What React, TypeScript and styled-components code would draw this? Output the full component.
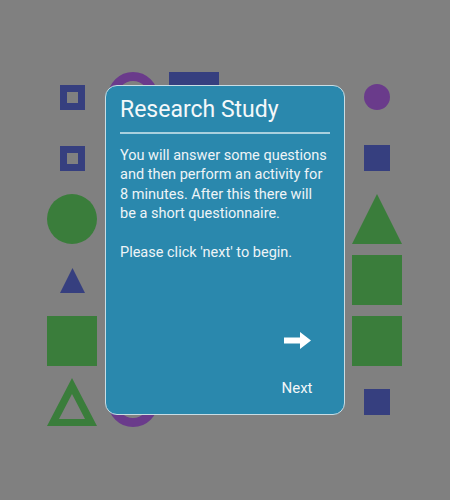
import React from "react";
import styled, { createGlobalStyle } from "styled-components";

const Global = createGlobalStyle`
  html, body { margin: 0; padding: 0; background: #808080; }
  body { font-family: Roboto, "Liberation Sans", sans-serif; }
`;

const BLUE = "#363f7f";
const GREEN = "#3a7d3b";
const PURPLE = "#6a3b8b";

const Page = styled.div`
  position: relative;
  width: 450px;
  height: 500px;
  background: #808080;
  box-sizing: border-box;
  padding: 72px 0 0 47px;
  overflow: hidden;
`;

const ShapeGrid = styled.div`
  display: grid;
  grid-template-columns: repeat(6, 50px);
  grid-template-rows: repeat(6, 50px);
  gap: 11px;
`;

const Cell = styled.div`
  display: flex;
  align-items: center;
  justify-content: center;
`;

const Square = styled.div<{ $size: number; $color: string }>`
  width: ${(p) => p.$size}px;
  height: ${(p) => p.$size}px;
  background: ${(p) => p.$color};
`;

const HollowSquare = styled.div<{ $size: number; $color: string; $border: number }>`
  box-sizing: border-box;
  width: ${(p) => p.$size}px;
  height: ${(p) => p.$size}px;
  border: ${(p) => p.$border}px solid ${(p) => p.$color};
`;

const Circle = styled.div<{ $size: number; $color: string }>`
  width: ${(p) => p.$size}px;
  height: ${(p) => p.$size}px;
  border-radius: 50%;
  background: ${(p) => p.$color};
`;

const Ring = styled.div<{ $size: number; $color: string; $border: number }>`
  box-sizing: border-box;
  width: ${(p) => p.$size}px;
  height: ${(p) => p.$size}px;
  border-radius: 50%;
  border: ${(p) => p.$border}px solid ${(p) => p.$color};
`;

const Triangle = ({ size, color, hollow }: { size: number; color: string; hollow?: boolean }) => (
  <svg width={size} height={size} viewBox="0 0 50 50">
    {hollow ? (
      <path
        fillRule="evenodd"
        fill={color}
        d="M25 1 L50 49 L0 49 Z M25 17 L12 42 L38 42 Z"
      />
    ) : (
      <path fill={color} d="M25 0 L50 50 L0 50 Z" />
    )}
  </svg>
);

const Card = styled.div`
  position: absolute;
  inset: 0;
  margin: auto;
  width: 240px;
  height: 330px;
  box-sizing: border-box;
  background: #2a88ad;
  border: 1.5px solid #c9dde4;
  border-radius: 12px;
  padding: 9px 14px 17px 14px;
  display: flex;
  flex-direction: column;
  color: #f2f6f8;
`;

const Title = styled.h1`
  margin: 0;
  font-family: Roboto, "Liberation Sans", sans-serif;
  font-weight: 400;
  font-size: 23px;
  line-height: 30px;
  color: #f4f8fa;
`;

const Divider = styled.hr`
  margin: 7px 0 0 0;
  border: none;
  height: 1.5px;
  background: #a9d0de;
`;

const Body = styled.p`
  margin: 12px 0 0 0;
  font-size: 14.5px;
  line-height: 19.5px;
  color: #eef4f7;
  white-space: pre-line;
`;

const Footer = styled.div`
  margin-top: auto;
  display: flex;
  justify-content: flex-end;
`;

const NextButton = styled.button`
  width: 66px;
  background: none;
  border: none;
  padding: 0;
  display: flex;
  flex-direction: column;
  align-items: center;
  gap: 30px;
  color: #f2f6f8;
  font-family: Roboto, "Liberation Sans", sans-serif;
  font-size: 15px;
  line-height: 18px;
  cursor: pointer;
`;

const Arrow = () => (
  <svg width="27" height="17" viewBox="0 0 27 17">
    <path fill="#ffffff" d="M0 5.5 H16 V0 L27 8.5 L16 17 V11.5 H0 Z" />
  </svg>
);

type Shape = React.ReactNode;

const cells: Shape[] = [
  // row 0
  <HollowSquare $size={25} $color={BLUE} $border={7} />,
  <Ring $size={50} $color={PURPLE} $border={9} />,
  <Square $size={51} $color={BLUE} />,
  null,
  null,
  <Circle $size={26} $color={PURPLE} />,
  // row 1
  <HollowSquare $size={25} $color={BLUE} $border={7} />,
  null,
  null,
  null,
  null,
  <Square $size={26} $color={BLUE} />,
  // row 2
  <Circle $size={50} $color={GREEN} />,
  null,
  null,
  null,
  null,
  <Triangle size={50} color={GREEN} />,
  // row 3
  <Triangle size={25} color={BLUE} />,
  null,
  null,
  null,
  null,
  <Square $size={50} $color={GREEN} />,
  // row 4
  <Square $size={50} $color={GREEN} />,
  null,
  null,
  null,
  null,
  <Square $size={50} $color={GREEN} />,
  // row 5
  <Triangle size={50} color={GREEN} hollow />,
  <Ring $size={50} $color={PURPLE} $border={9} />,
  null,
  null,
  null,
  <Square $size={26} $color={BLUE} />,
];

export default function App() {
  return (
    <>
      <Global />
      <Page>
        <ShapeGrid>
          {cells.map((c, i) => (
            <Cell key={i}>{c}</Cell>
          ))}
        </ShapeGrid>
        <Card>
          <Title>Research Study</Title>
          <Divider />
          <Body>
            {"You will answer some questions and then perform an activity for 8 minutes. After this there will be a short questionnaire.\n\nPlease click 'next' to begin."}
          </Body>
          <Footer>
            <NextButton>
              <Arrow />
              <span>Next</span>
            </NextButton>
          </Footer>
        </Card>
      </Page>
    </>
  );
}
